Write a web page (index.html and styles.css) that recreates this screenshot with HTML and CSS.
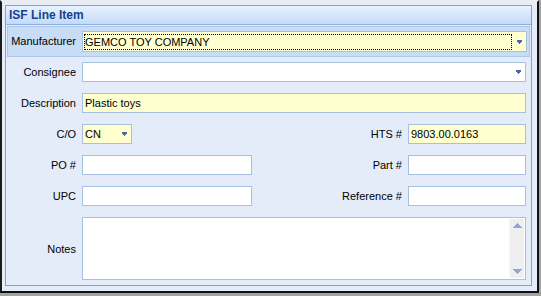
FILE: index.html
```html
<!DOCTYPE html>
<html>
<head>
<meta charset="utf-8">
<link rel="stylesheet" href="styles.css">
</head>
<body>
<div class="frame">
  <div class="group">
    <div class="group-header">ISF Line Item</div>
    <div class="group-body">
      <div class="band">
        <label class="lbl lbl-band">Manufacturer</label>
        <div class="input yellow combo tall">
          <span class="focus">GEMCO TOY COMPANY</span>
          <svg class="arrow" width="5" height="4" viewBox="0 0 5 4" shape-rendering="crispEdges"><rect x="0" y="0" width="5" height="2" fill="#4a6aa5"/><rect x="1" y="2" width="3" height="1" fill="#4a6aa5"/><rect x="2" y="3" width="1" height="1" fill="#4a6aa5"/></svg>
        </div>
      </div>
      <div class="rows">
        <div class="row">
          <label class="lbl">Consignee</label>
          <div class="input combo">
            <span class="val"></span>
            <svg class="arrow" width="5" height="4" viewBox="0 0 5 4" shape-rendering="crispEdges"><rect x="0" y="0" width="5" height="2" fill="#4a6aa5"/><rect x="1" y="2" width="3" height="1" fill="#4a6aa5"/><rect x="2" y="3" width="1" height="1" fill="#4a6aa5"/></svg>
          </div>
        </div>
        <div class="row">
          <label class="lbl">Description</label>
          <div class="input yellow"><span class="val">Plastic toys</span></div>
        </div>
        <div class="row pair">
          <div class="field">
            <label class="lbl">C/O</label>
            <div class="input yellow combo w-co">
              <span class="val">CN</span>
              <svg class="arrow" width="5" height="4" viewBox="0 0 5 4" shape-rendering="crispEdges"><rect x="0" y="0" width="5" height="2" fill="#4a6aa5"/><rect x="1" y="2" width="3" height="1" fill="#4a6aa5"/><rect x="2" y="3" width="1" height="1" fill="#4a6aa5"/></svg>
            </div>
          </div>
          <div class="field">
            <label class="lbl lbl-right">HTS #</label>
            <div class="input yellow w-right"><span class="val">9803.00.0163</span></div>
          </div>
        </div>
        <div class="row pair">
          <div class="field">
            <label class="lbl">PO #</label>
            <div class="input w-po"><span class="val"></span></div>
          </div>
          <div class="field">
            <label class="lbl lbl-right">Part #</label>
            <div class="input w-right"><span class="val"></span></div>
          </div>
        </div>
        <div class="row pair">
          <div class="field">
            <label class="lbl">UPC</label>
            <div class="input w-po"><span class="val"></span></div>
          </div>
          <div class="field">
            <label class="lbl lbl-right">Reference #</label>
            <div class="input w-right"><span class="val"></span></div>
          </div>
        </div>
        <div class="row notes">
          <label class="lbl">Notes</label>
          <div class="input textarea">
            <div class="ta-body"></div>
            <div class="scrollbar">
              <svg width="9" height="5" viewBox="0 0 9 5" shape-rendering="crispEdges"><polygon points="4.5,0 9,5 0,5" fill="#98a6cf"/></svg>
              <svg width="9" height="5" viewBox="0 0 9 5" shape-rendering="crispEdges"><polygon points="0,0 9,0 4.5,5" fill="#98a6cf"/></svg>
            </div>
          </div>
        </div>
      </div>
    </div>
  </div>
</div>
</body>
</html>
```
FILE: styles.css
```css
html, body {
  margin: 0;
  padding: 0;
}
body {
  background: #a3a3a3;
  width: 541px;
  height: 296px;
  font-family: "Liberation Sans", Arial, sans-serif;
  font-size: 11px;
  color: #000;
}
.frame {
  box-sizing: border-box;
  width: 539px;
  height: 293px;
  background: #e5edfa;
  border-top: 2px solid #eeeeee;
  border-left: 2px solid #1c1c1c;
  border-right: 2px solid #101010;
  border-bottom: 2px solid #101010;
  padding: 3px 0 0 3px;
}
.group {
  box-sizing: border-box;
  width: 527px;
  height: 281px;
  border: 1px solid #7ea3d2;
  background: #e4ecf9;
  display: flex;
  flex-direction: column;
}
.group-header {
  height: 18px;
  line-height: 19px;
  border-bottom: 1px solid #8fb1de;
  background: linear-gradient(#e9f2ff, #c3daf8);
  color: #15428b;
  font-weight: bold;
  font-size: 12px;
  padding-left: 3px;
}
.group-body {
  padding-top: 1px;
  display: flex;
  flex-direction: column;
}
.band {
  margin: 0 1px;
  height: 31px;
  box-sizing: border-box;
  border: 1px solid #abc7ec;
  background: #c8dcf5;
  display: flex;
  align-items: flex-start;
  padding: 4px 3px 0 0;
}
.rows {
  padding: 5px 5px 0 0;
  display: flex;
  flex-direction: column;
  gap: 11px;
}
.row {
  display: flex;
  align-items: center;
  height: 20px;
}
.row.notes {
  height: 63px;
}
.pair {
  justify-content: space-between;
}
.field {
  display: flex;
  align-items: center;
}
.lbl {
  width: 70px;
  flex: none;
  text-align: right;
  margin-right: 6px;
  color: #000;
}
.lbl-band {
  width: 68px;
  line-height: 21px;
}
.lbl-right {
  width: 80px;
}
.input {
  box-sizing: border-box;
  height: 20px;
  flex: 1;
  border: 1px solid #a6c0e0;
  background: #ffffff;
  display: flex;
  align-items: center;
  padding-left: 2px;
  position: relative;
}
.input.tall {
  height: 21px;
}
.input.yellow {
  background: #ffffd0;
}
.w-co { flex: none; width: 50px; }
.w-po { flex: none; width: 170px; }
.w-right { flex: none; width: 118px; }
.val {
  flex: 1;
  white-space: nowrap;
}
.focus {
  box-sizing: border-box;
  height: 16px;
  width: 428px;
  border: 1px dotted #000;
  padding-left: 0;
  line-height: 14px;
  margin-left: -1px;
  white-space: nowrap;
}
.combo .arrow {
  flex: none;
  margin: 0 4px 0 0;
}
.input.tall .focus + .arrow {
  margin-left: 5px;
}
.w-co .arrow {
  margin-right: 4px;
}
.textarea {
  height: 63px;
  padding: 0;
  align-items: stretch;
}
.ta-body {
  flex: 1;
}
.scrollbar {
  width: 14px;
  margin: 1px 1px 1px 0;
  background: #efefef;
  border-left: 1px solid #f8f8f8;
  display: flex;
  flex-direction: column;
  justify-content: space-between;
  align-items: center;
  padding: 4px 0 4px 0;
}
```
